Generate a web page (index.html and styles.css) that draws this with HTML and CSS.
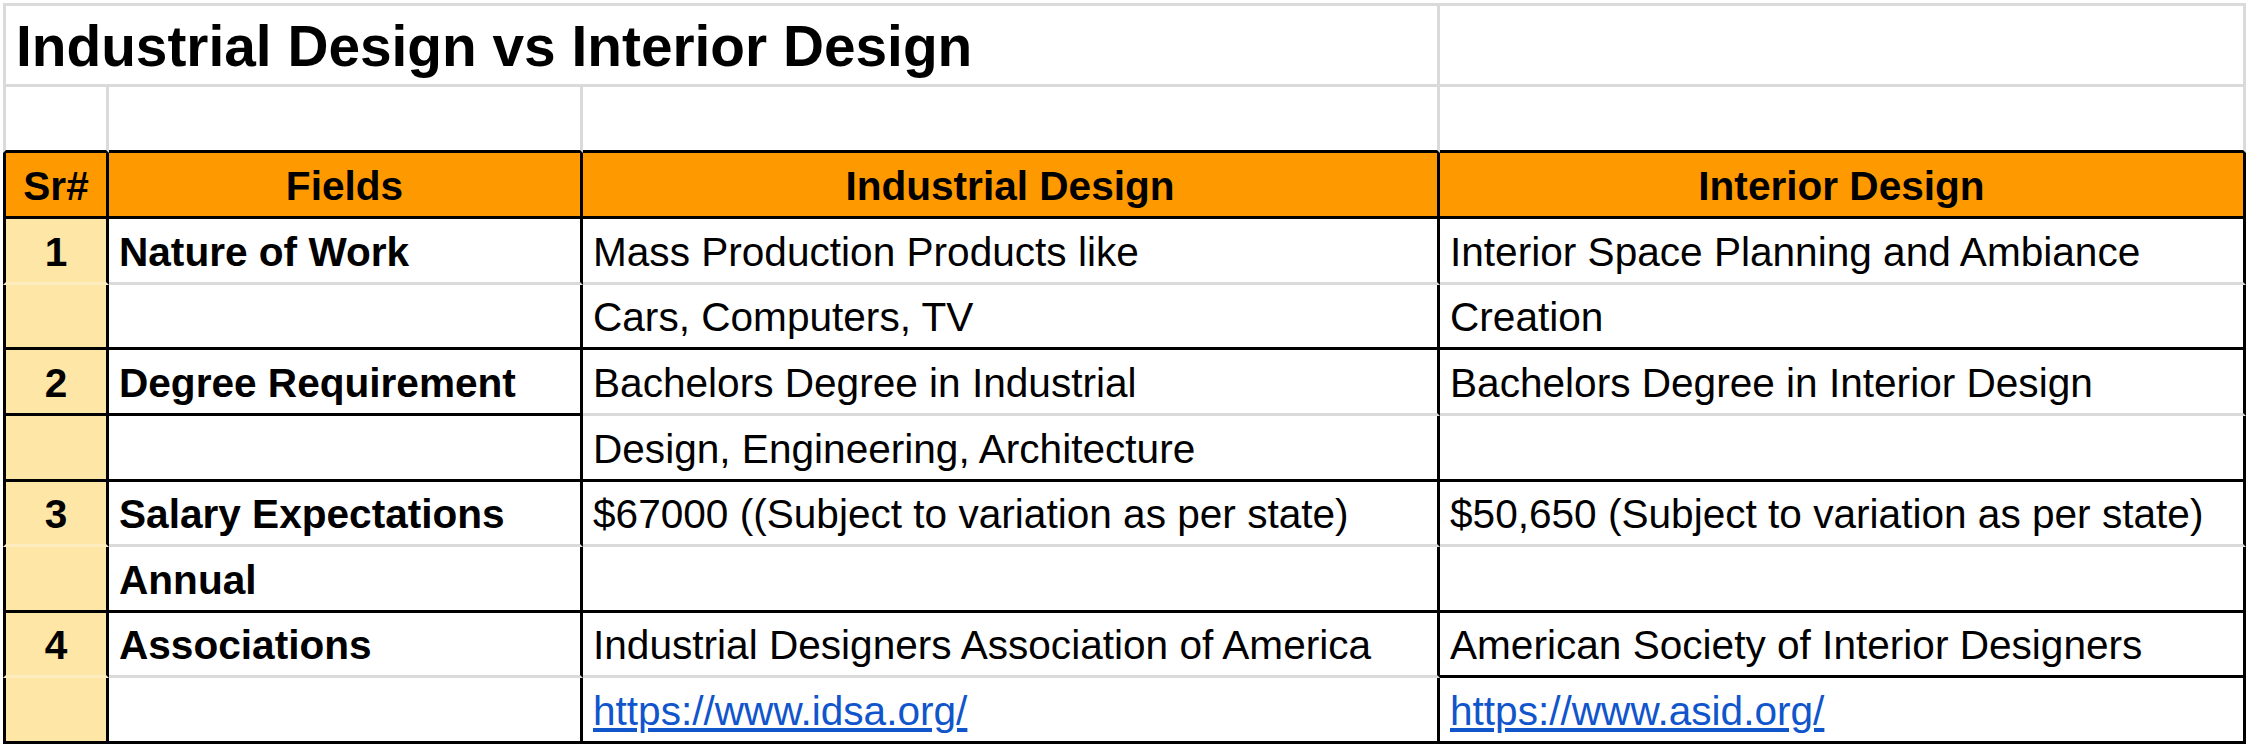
FILE: index.html
```html
<!DOCTYPE html>
<html lang="en">
<head>
<meta charset="utf-8">
<title>Industrial Design vs Interior Design</title>
<link rel="stylesheet" href="styles.css">
</head>
<body>
<div class="sheet">
  <!-- title row -->
  <div class="cell title first gl top gb gr span3">Industrial Design vs Interior Design</div>
  <div class="cell top gb gr"></div>

  <!-- blank row -->
  <div class="cell first gl gr"></div>
  <div class="cell gr"></div>
  <div class="cell gr"></div>
  <div class="cell gr"></div>

  <!-- header -->
  <div class="cell head first">Sr#</div>
  <div class="cell head">Fields</div>
  <div class="cell head">Industrial Design</div>
  <div class="cell head">Interior Design</div>

  <!-- 1 -->
  <div class="cell sr first yb">1</div>
  <div class="cell bold gb">Nature of Work</div>
  <div class="cell gb">Mass Production Products like</div>
  <div class="cell gb">Interior Space Planning and Ambiance</div>
  <div class="cell sr first"></div>
  <div class="cell"></div>
  <div class="cell">Cars, Computers, TV</div>
  <div class="cell">Creation</div>

  <!-- 2 -->
  <div class="cell sr first">2</div>
  <div class="cell bold">Degree Requirement</div>
  <div class="cell gb">Bachelors Degree in Industrial</div>
  <div class="cell gb">Bachelors Degree in Interior Design</div>
  <div class="cell sr first"></div>
  <div class="cell"></div>
  <div class="cell">Design, Engineering, Architecture</div>
  <div class="cell"></div>

  <!-- 3 -->
  <div class="cell sr first yb">3</div>
  <div class="cell bold gb">Salary Expectations</div>
  <div class="cell gb">$67000 ((Subject to variation as per state)</div>
  <div class="cell gb">$50,650 (Subject to variation as per state)</div>
  <div class="cell sr first"></div>
  <div class="cell bold">Annual</div>
  <div class="cell"></div>
  <div class="cell"></div>

  <!-- 4 -->
  <div class="cell sr first yb">4</div>
  <div class="cell bold gb">Associations</div>
  <div class="cell gb">Industrial Designers Association of America</div>
  <div class="cell">American Society of Interior Designers</div>
  <div class="cell sr first"></div>
  <div class="cell"></div>
  <div class="cell"><a class="link" href="https://www.idsa.org/">https://www.idsa.org/</a></div>
  <div class="cell"><a class="link" href="https://www.asid.org/">https://www.asid.org/</a></div>
</div>
</body>
</html>
```

FILE: styles.css
```css
html, body {
  margin: 0;
  padding: 0;
  background: #ffffff;
}

body {
  padding: 3px 0 0 3px;
}

.sheet {
  display: grid;
  grid-template-columns: 106px 474px 857px 806px;
  grid-template-rows: 84px 66px 66px repeat(8, 65.625px);
  font-family: "Liberation Sans", Arial, sans-serif;
  color: #000;
}

.cell {
  box-sizing: border-box;
  display: flex;
  align-items: flex-end;
  padding: 0 10px 7px 10px;
  border-right: 3px solid #000;
  border-bottom: 3px solid #000;
  font-size: 40.6px;
  line-height: 46px;
  white-space: nowrap;
  overflow: hidden;
  min-width: 0;
}

.first {
  border-left: 3px solid #000;
}

.top {
  border-top: 3px solid #dadada;
}

.gl {
  border-left-color: #dadada;
}

.gr {
  border-right-color: #dadada;
}

.gb {
  border-bottom-color: #dadada;
}

.span3 {
  grid-column: span 3;
}

.title {
  font-size: 56.8px;
  line-height: 66px;
  font-weight: bold;
  padding-bottom: 4px;
}

.head {
  background: #ff9900;
  font-weight: bold;
  justify-content: center;
}

.sr {
  background: #fde6a6;
  font-weight: bold;
  justify-content: center;
}

.yb {
  border-bottom-color: #fdecbd;
}

.bold {
  font-weight: bold;
}

.link {
  color: #1155cc;
  text-decoration: underline;
}
```
